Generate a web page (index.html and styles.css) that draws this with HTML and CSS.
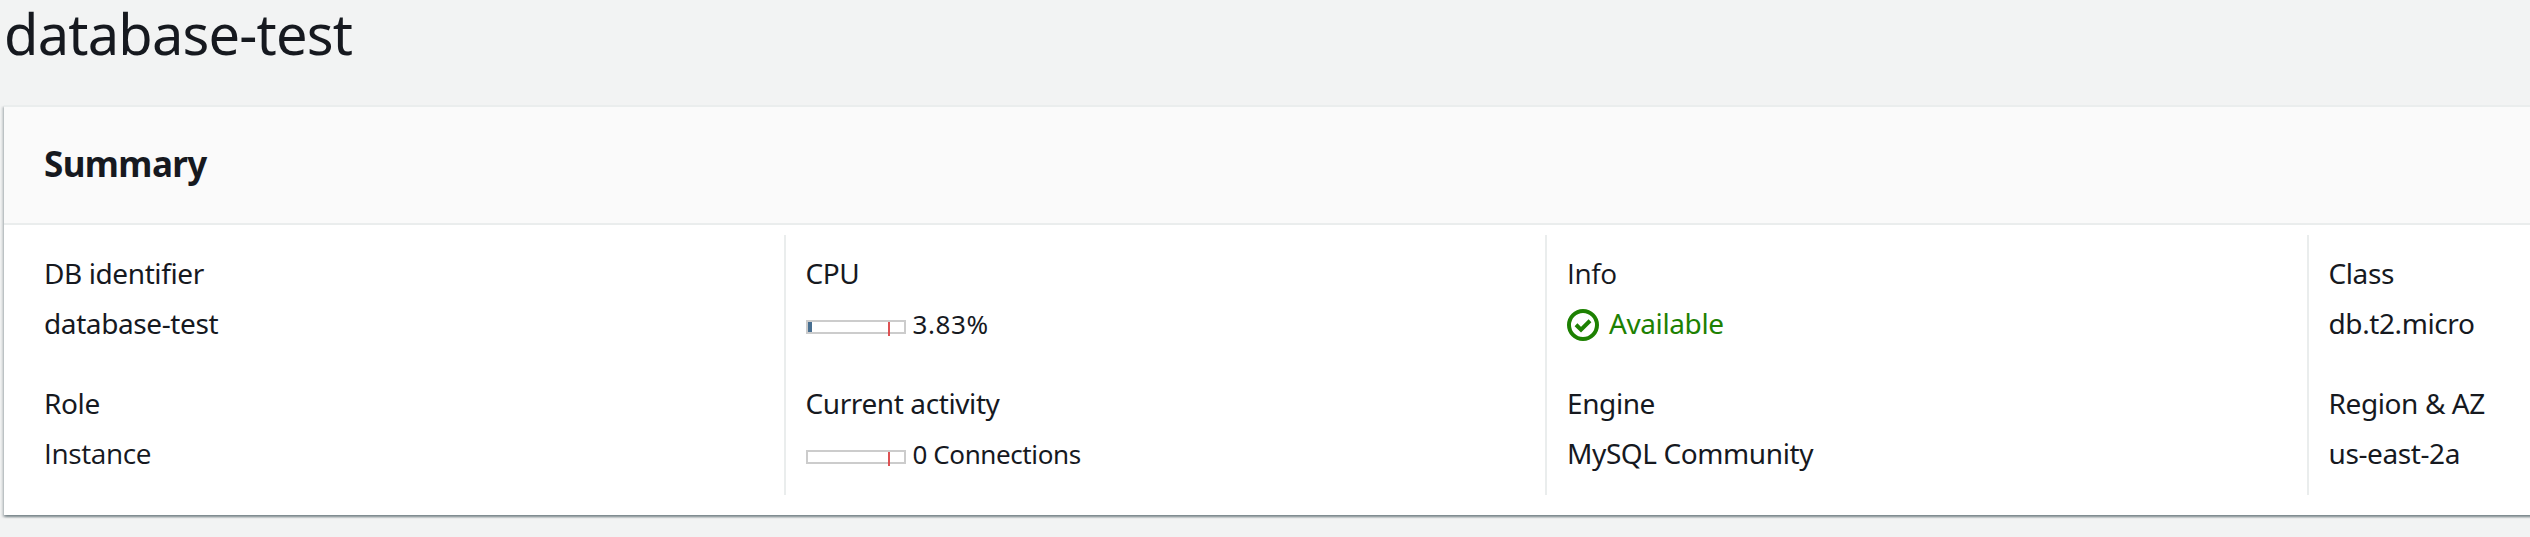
FILE: index.html
```html
<!DOCTYPE html>
<html lang="en">
<head>
    <meta charset="UTF-8">
    <meta name="viewport" content="width=device-width, initial-scale=1.0">
    <title>database-test</title>
    <link rel="stylesheet" href="styles.css">
</head>
<body>
    <h1 class="page-title">database-test</h1>
    <div class="panel">
        <div class="panel-header">
            <h2>Summary</h2>
        </div>
        <div class="columns">
            <div class="column">
                <div class="item">
                    <div class="label">DB identifier</div>
                    <div class="value">database-test</div>
                </div>
                <div class="item">
                    <div class="label">Role</div>
                    <div class="value plain-i">Instance</div>
                </div>
            </div>
            <div class="column">
                <div class="item">
                    <div class="label">CPU</div>
                    <div class="value metric">
                        <div class="meter">
                            <div class="meter-fill" style="width: 3.83%"></div>
                            <div class="meter-limit"></div>
                        </div>
                        <span class="percent">3.83%</span>
                    </div>
                </div>
                <div class="item">
                    <div class="label">Current activity</div>
                    <div class="value metric">
                        <div class="meter">
                            <div class="meter-limit"></div>
                        </div>
                        <span>0 Connections</span>
                    </div>
                </div>
            </div>
            <div class="column">
                <div class="item">
                    <div class="label plain-i">Info</div>
                    <div class="value status">
                        <svg class="icon" viewBox="0 0 32 32">
                            <circle cx="16" cy="16" r="14"/>
                            <path d="M9 15.8l5 4.8 9-8.8"/>
                        </svg>
                        <span>Available</span>
                    </div>
                </div>
                <div class="item">
                    <div class="label">Engine</div>
                    <div class="value">MySQL Community</div>
                </div>
            </div>
            <div class="column">
                <div class="item">
                    <div class="label">Class</div>
                    <div class="value">db.t2.micro</div>
                </div>
                <div class="item">
                    <div class="label">Region &amp; AZ</div>
                    <div class="value">us-east-2a</div>
                </div>
            </div>
        </div>
    </div>
</body>
</html>
```
FILE: styles.css
```css
* {
    box-sizing: border-box;
}
body {
    margin: 0;
    height: 537px;
    overflow: hidden;
    background-color: #f2f3f3;
    color: #16191f;
    font-family: "Noto Sans", "Open Sans", sans-serif;
    font-size: 28px;
    line-height: 44px;
    letter-spacing: -0.4px;
}
.page-title {
    margin: 0 0 39px 4px;
    font-size: 56px;
    font-weight: 400;
    line-height: 66px;
    letter-spacing: -0.8px;
}
.panel {
    height: 410px;
    margin: 0 -6px 0 4px;
    border-top: 2px solid #eaeded;
    background-color: #fff;
    box-shadow: 0 2px 2px 0 rgba(0, 28, 36, 0.3),
        2px 2px 2px 0 rgba(0, 28, 36, 0.15),
        -2px 2px 2px 0 rgba(0, 28, 36, 0.15);
}
.panel-header {
    height: 118px;
    padding: 33px 40px 0;
    border-bottom: 2px solid #eaeded;
    background-color: #fafafa;
}
.panel-header h2 {
    margin: 0;
    font-size: 35px;
    font-weight: 700;
    line-height: 48px;
    letter-spacing: -0.6px;
}
.columns {
    display: grid;
    grid-template-columns: repeat(3, 761.5px) 1fr;
    padding: 10px 0 20px 18px;
}
.column {
    padding-left: 20px;
    border-left: 2px solid #eaeded;
}
.column:first-child {
    border-left-color: transparent;
}
.item {
    height: 130px;
    padding: 16px 0 20px;
}
.label {
    margin-bottom: 6px;
}
/* capital I without serifs */
.plain-i {
    font-family: "Open Sans", sans-serif;
}
.metric {
    display: flex;
    align-items: center;
    font-size: 26px;
}
.metric span {
    padding-top: 1px;
}
.metric .percent {
    letter-spacing: 0.6px;
}
.meter {
    position: relative;
    width: 100px;
    height: 14px;
    margin: 7px 7px 0 0;
    border: 2px solid #ccc;
}
.meter-fill {
    min-width: 4px;
    height: 100%;
    background-color: #486f91;
}
.meter-limit {
    position: absolute;
    top: 0;
    left: 80px;
    width: 2px;
    height: 14px;
    background-color: #dd5153;
}
.status {
    display: flex;
    align-items: center;
    color: #1d8102;
}
.icon {
    width: 32px;
    height: 32px;
    margin: 4px 10px 0 0;
    fill: none;
    stroke: currentColor;
    stroke-width: 4;
}
```
